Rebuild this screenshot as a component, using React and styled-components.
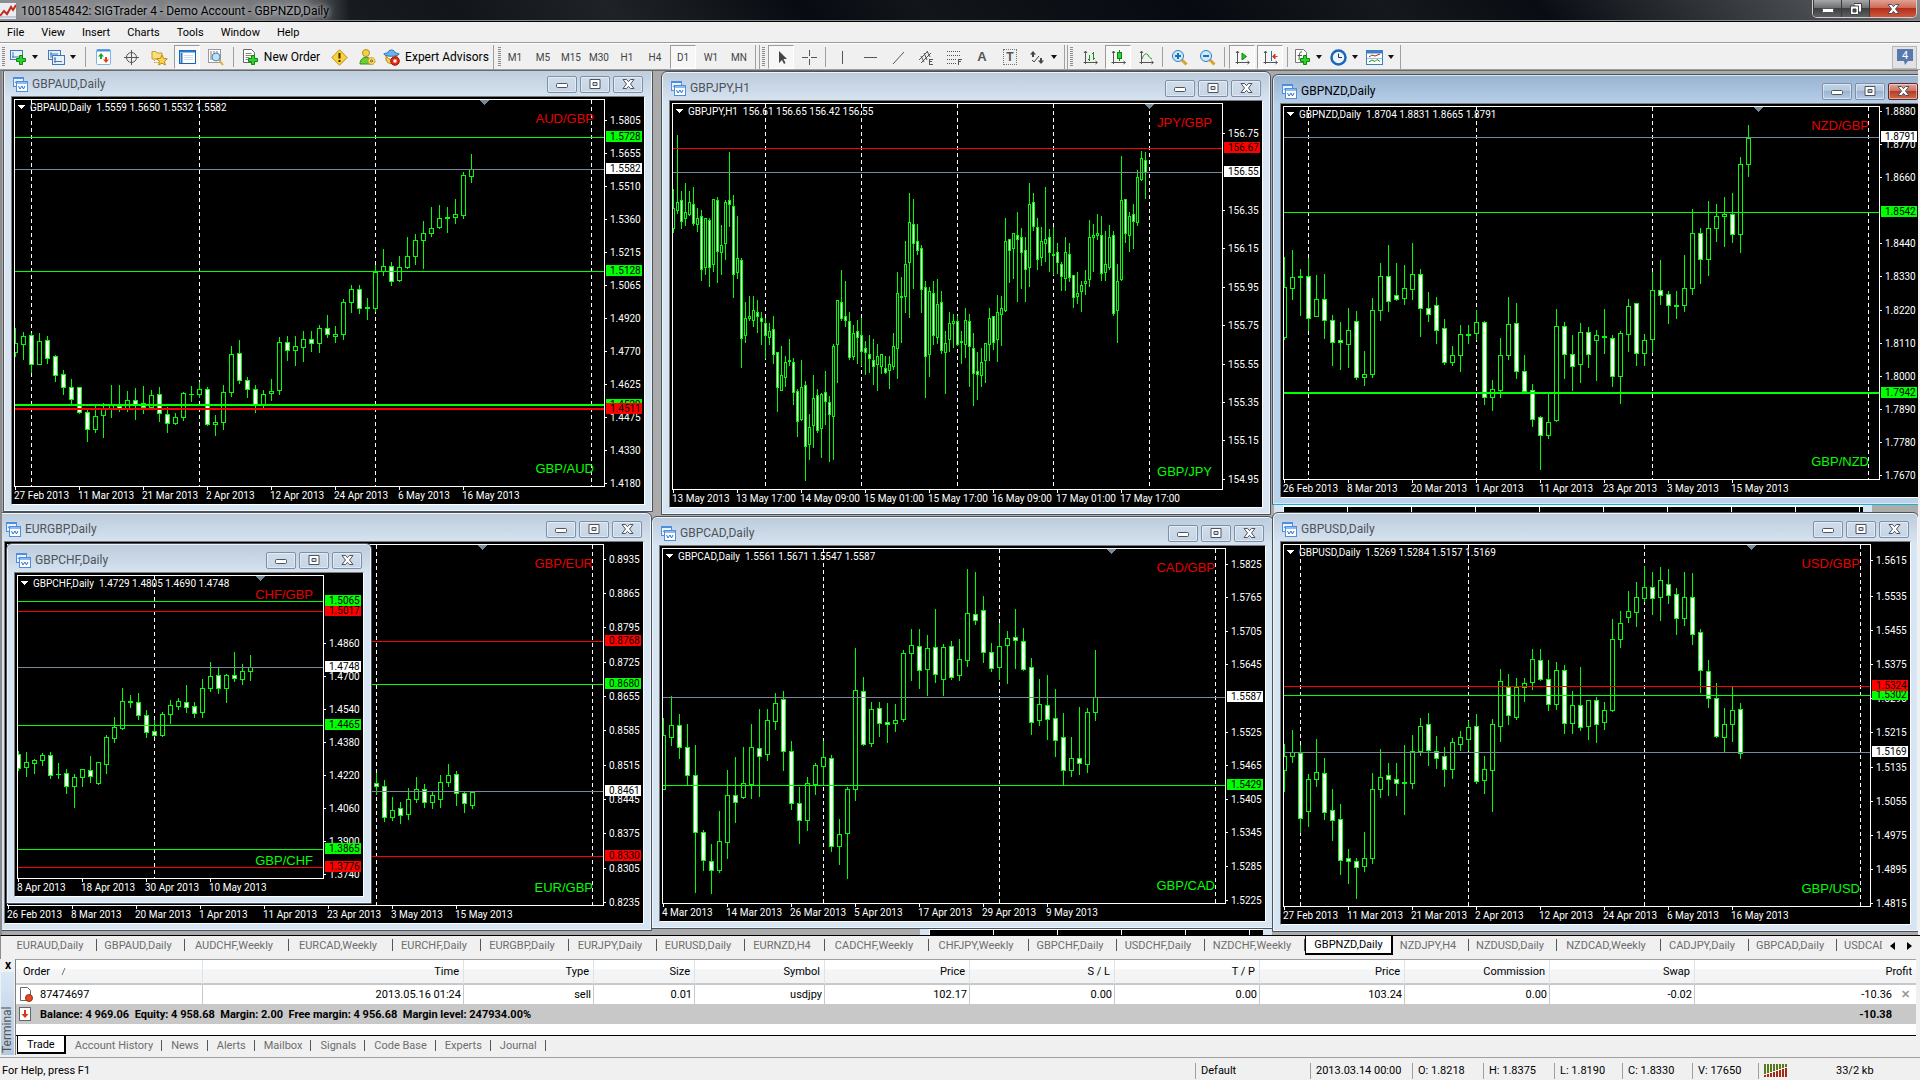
import React from 'react'
import styled, { createGlobalStyle, css } from 'styled-components'

const fonts = {
    ui: 'Roboto, "Open Sans", "Liberation Sans", sans-serif',
    label: '"Liberation Sans", Arial, sans-serif',
}

const colors = {
    face: '#f0f0f0',
    lime: '#00ff00',
    red: '#ff0000',
    slate: '#778899',
    muted: '#6d6d6d',
}

const GlobalStyle = createGlobalStyle`
    * {
        box-sizing: border-box;
    }

    body {
        margin: 0;
        overflow: hidden;
        background: ${colors.face};
        font-family: ${fonts.ui};
        font-size: 12px;
        color: #000;
    }

    button {
        margin: 0;
        padding: 0;
        border: 0;
        background: none;
        font: inherit;
        color: inherit;
    }
`

/* ---------- chart data ---------- */

// candle: [high, body top, body bottom, low, 1 when falling], in thirds of a pixel
const charts = {
    aud: {
        title: 'GBPAUD,Daily',
        quote: '1.5559 1.5650 1.5532 1.5582',
        top: 'AUD/GBP',
        bottom: 'GBP/AUD',
        left: 1, y: -3, width: 632, height: 407, base: 21, marker: 472,
        periods: [2, 23, 45, 72],
        lines: [
            [142, 'lime', '1.5728'],
            [238, 'slate', '1.5582'],
            [544, 'lime', '1.5128'],
            [944, 'lime', '1.4529', 2],
            [957, 'red', '1.4511', 2],
        ],
        prices: [[90, '1.5805'], [188, '1.5655'], [287, '1.5510'], [386, '1.5360'], [486, '1.5215'], [585, '1.5065'], [684, '1.4920'], [783, '1.4770'], [882, '1.4625'], [981, '1.4475'], [1080, '1.4330'], [1178, '1.4180']],
        dates: ['27 Feb 2013', '11 Mar 2013', '21 Mar 2013', '2 Apr 2013', '12 Apr 2013', '24 Apr 2013', '6 May 2013', '16 May 2013'],
        candles: [
            [715, 760, 785, 797], [727, 737, 761, 806], [730, 736, 823, 845, 1], [729, 752, 821, 822], [738, 751, 803, 818, 1], [796, 799, 854, 872, 1],
            [840, 853, 892, 911, 1], [866, 892, 926, 942, 1], [892, 892, 967, 968, 1], [961, 967, 1016, 1052, 1], [948, 979, 1016, 1026], [940, 955, 976, 1040],
            [885, 945, 955, 980], [885, 948, 956, 962, 1], [903, 931, 955, 963], [895, 931, 941, 986, 1], [888, 940, 952, 970, 1], [901, 915, 951, 958],
            [891, 913, 970, 992, 1], [952, 973, 1000, 1026, 1], [970, 982, 1000, 1001], [907, 910, 980, 990], [888, 912, 913, 932], [877, 898, 913, 920],
            [891, 898, 1003, 1006, 1], [976, 997, 1003, 1034], [885, 907, 997, 1017], [768, 793, 905, 917], [751, 790, 871, 879, 1], [861, 871, 898, 920, 1],
            [886, 898, 944, 965, 1], [900, 913, 944, 955], [867, 904, 910, 930], [741, 757, 901, 911], [738, 757, 781, 809, 1], [738, 769, 781, 825],
            [723, 748, 772, 812], [724, 748, 758, 784, 1], [706, 715, 758, 785], [675, 715, 733, 742, 1], [709, 733, 737, 755], [627, 637, 733, 746],
            [586, 598, 637, 665], [586, 596, 653, 668, 1], [625, 652, 653, 686], [526, 547, 653, 663], [477, 529, 544, 554], [517, 529, 574, 584, 1],
            [499, 532, 571, 573], [442, 499, 532, 533], [433, 451, 499, 521], [393, 430, 451, 533], [351, 415, 430, 438], [346, 385, 412, 413],
            [351, 382, 385, 426, 1], [327, 373, 382, 398], [247, 256, 374, 383], [192, 238, 257, 275],
        ],
    },
    eur: {
        title: 'EURGBP,Daily',
        quote: '',
        top: 'GBP/EUR',
        bottom: 'EUR/GBP',
        left: -6, y: 442, width: 638, height: 381, base: 96, marker: 477,
        periods: [46, 73],
        first: 46,
        lines: [
            [394, 'red', '0.8768'],
            [523, 'lime', '0.8680'],
            [844, 'slate', '0.8461'],
            [1038, 'red', '0.8330'],
        ],
        prices: [[146, '0.8935'], [248, '0.8865'], [350, '0.8795'], [455, '0.8725'], [557, '0.8655'], [659, '0.8585'], [764, '0.8515'], [867, '0.8445'], [968, '0.8375'], [1073, '0.8305'], [1175, '0.8235']],
        dates: ['26 Feb 2013', '8 Mar 2013', '20 Mar 2013', '1 Apr 2013', '11 Apr 2013', '23 Apr 2013', '3 May 2013', '15 May 2013'],
        candles: [
            [790, 820, 829, 851, 1], [811, 829, 922, 932, 1], [862, 901, 922, 929], [876, 895, 916, 938, 1], [835, 868, 913, 926], [802, 838, 868, 875],
            [823, 838, 877, 890, 1], [844, 856, 875, 893], [796, 817, 868, 890], [763, 796, 815, 827], [783, 793, 850, 884, 1], [843, 850, 880, 906, 1], [844, 845, 884, 893],
        ],
    },
    jpy: {
        title: 'GBPJPY,H1',
        quote: '156.61 156.65 156.42 156.55',
        top: 'JPY/GBP',
        bottom: 'GBP/JPY',
        left: 659, y: 1, width: 592, height: 406, base: 93, marker: 479, step: 4,
        periods: [23, 47, 71, 95, 119],
        lines: [
            [235, 'red', '156.67'],
            [307, 'slate', '156.55'],
        ],
        prices: [[188, '156.75'], [419, '156.35'], [533, '156.15'], [650, '155.95'], [764, '155.75'], [881, '155.55'], [995, '155.35'], [1109, '155.15'], [1226, '154.95']],
        dates: ['13 May 2013', '13 May 17:00', '14 May 09:00', '15 May 01:00', '15 May 17:00', '16 May 09:00', '17 May 01:00', '17 May 17:00'],
        candles: [
            [357, 415, 473, 485], [196, 397, 420, 430], [364, 391, 452, 473, 1], [340, 427, 445, 464], [363, 397, 433, 434], [352, 403, 458, 466, 1], [415, 445, 463, 484],
            [421, 439, 596, 629, 1], [444, 445, 590, 611], [445, 451, 590, 647, 1], [388, 388, 583, 602], [381, 391, 542, 635, 1], [466, 526, 547, 611], [391, 397, 520, 566],
            [246, 391, 403, 467, 1], [376, 409, 611, 680, 1], [438, 565, 607, 623], [565, 571, 803, 890, 1], [697, 745, 796, 815], [678, 739, 745, 751], [679, 721, 751, 767],
            [690, 727, 739, 785, 1], [726, 745, 754, 821, 1], [745, 760, 796, 865, 1], [760, 784, 802, 823], [738, 778, 853, 878, 1], [847, 847, 952, 1022, 1], [829, 916, 959, 960],
            [859, 877, 922, 947], [808, 869, 872, 884], [865, 877, 967, 1003, 1], [958, 964, 1054, 1097, 1], [870, 952, 1048, 1049], [933, 946, 1129, 1229, 1], [1032, 1072, 1123, 1166],
            [915, 985, 1066, 1130], [957, 976, 1079, 1085, 1], [969, 973, 1073, 1160], [903, 967, 992, 1061, 1], [979, 997, 1033, 1172, 1], [822, 829, 1039, 1166], [690, 691, 823, 935],
            [601, 697, 745, 751, 1], [633, 739, 751, 767, 1], [727, 754, 860, 866, 1], [765, 790, 859, 866], [751, 784, 802, 878, 1], [745, 796, 842, 884, 1], [814, 835, 847, 911, 1],
            [796, 853, 865, 905, 1], [808, 871, 889, 941, 1], [822, 859, 883, 959], [852, 853, 889, 908], [858, 893, 905, 910, 1], [858, 883, 899, 953], [789, 829, 889, 896],
            [606, 670, 835, 923], [622, 677, 682, 815, 1], [514, 583, 677, 727], [370, 457, 577, 740], [387, 463, 520, 653, 1], [463, 514, 541, 551, 1], [526, 535, 658, 727, 1],
            [634, 652, 859, 980, 1], [652, 664, 853, 917], [633, 670, 796, 821, 1], [628, 703, 802, 820], [664, 697, 841, 848, 1], [784, 820, 847, 968], [727, 760, 808, 842],
            [733, 754, 760, 830], [739, 754, 821, 824, 1], [784, 814, 817, 878], [715, 751, 821, 862], [733, 754, 829, 947, 1], [790, 835, 910, 1004, 1], [847, 904, 911, 986, 1],
            [835, 877, 916, 947], [820, 820, 871, 935], [715, 745, 823, 871], [739, 739, 815, 836, 1], [676, 727, 808, 872], [679, 715, 733, 824], [445, 514, 721, 722],
            [508, 508, 541, 635, 1], [490, 490, 535, 623], [426, 496, 508, 692, 1], [474, 502, 547, 653, 1], [502, 541, 596, 692, 1], [340, 403, 590, 647], [370, 397, 467, 481, 1],
            [445, 472, 566, 596, 1], [472, 514, 560, 584], [352, 508, 520, 572], [478, 502, 547, 602, 1], [472, 551, 554, 611], [519, 547, 577, 608, 1], [577, 583, 617, 659, 1],
            [502, 547, 623, 659], [520, 553, 622, 634, 1], [616, 616, 680, 710, 1], [607, 670, 677, 698], [634, 646, 664, 722], [601, 634, 640, 671], [451, 502, 628, 647],
            [463, 496, 500, 602], [433, 490, 496, 508], [439, 496, 610, 629, 1], [484, 583, 607, 629], [466, 502, 590, 596], [484, 496, 728, 734, 1], [583, 634, 721, 815],
            [259, 391, 628, 629], [388, 388, 490, 515, 1], [427, 439, 496, 542], [403, 433, 452, 533, 1], [301, 322, 457, 464], [244, 265, 328, 330], [247, 271, 306, 383, 1],
        ],
    },
    cad: {
        title: 'GBPCAD,Daily',
        quote: '1.5561 1.5671 1.5547 1.5587',
        top: 'CAD/GBP',
        bottom: 'GBP/CAD',
        left: 649, y: 446, width: 605, height: 375, base: 108, marker: 451,
        periods: [20, 42, 69],
        lines: [
            [562, 'slate', '1.5587'],
            [826, 'lime', '1.5429'],
        ],
        prices: [[161, '1.5825'], [260, '1.5765'], [362, '1.5705'], [461, '1.5645'], [665, '1.5525'], [764, '1.5465'], [866, '1.5405'], [965, '1.5345'], [1067, '1.5285'], [1169, '1.5225']],
        dates: ['4 Mar 2013', '14 Mar 2013', '26 Mar 2013', '5 Apr 2013', '17 Apr 2013', '29 Apr 2013', '9 May 2013'],
        candles: [
            [625, 676, 836, 837], [559, 646, 680, 704], [613, 646, 710, 743, 1], [643, 710, 794, 821, 1], [705, 796, 965, 1145, 1], [960, 967, 1051, 1079, 1],
            [1003, 1053, 1079, 1148, 1], [904, 994, 1081, 1085], [781, 856, 995, 1043], [742, 856, 875, 935, 1], [711, 820, 862, 863], [642, 712, 821, 863],
            [598, 715, 737, 857, 1], [598, 631, 733, 751], [549, 580, 632, 656], [544, 568, 722, 779, 1], [693, 724, 880, 896, 1], [832, 880, 929, 998, 1],
            [802, 820, 931, 960], [759, 766, 823, 851], [694, 742, 769, 826], [736, 745, 1009, 1022, 1], [928, 973, 1009, 1061], [832, 838, 970, 1103],
            [414, 541, 838, 869], [502, 544, 703, 705, 1], [577, 598, 700, 707], [577, 595, 638, 677, 1], [580, 637, 643, 695, 1], [583, 631, 640, 662],
            [421, 430, 628, 632], [358, 406, 428, 510], [357, 409, 479, 533, 1], [376, 415, 478, 554], [297, 412, 493, 515, 1], [402, 412, 508, 554],
            [393, 409, 500, 507, 1], [388, 448, 496, 510], [178, 310, 449, 467], [187, 313, 331, 341, 1], [258, 301, 425, 455, 1], [400, 427, 473, 483, 1],
            [339, 409, 472, 506], [364, 385, 406, 518], [297, 382, 391, 473, 1], [354, 394, 476, 480, 1], [445, 472, 635, 671, 1], [508, 583, 631, 644],
            [495, 586, 628, 686, 1], [538, 625, 689, 738, 1], [610, 682, 781, 826, 1], [682, 745, 781, 798], [592, 745, 760, 791, 1], [595, 607, 763, 785], [421, 562, 605, 629],
        ],
    },
    chf: {
        title: 'GBPCHF,Daily',
        quote: '1.4729 1.4805 1.4690 1.4748',
        top: 'CHF/GBP',
        bottom: 'GBP/CHF',
        left: 4, y: 473, width: 348, height: 323, base: 189, marker: 245,
        periods: [17],
        lines: [
            [304, 'red', '1.5017'],
            [274, 'lime', '1.5065'],
            [472, 'slate', '1.4748'],
            [646, 'lime', '1.4465'],
            [1018, 'lime', '1.3865'],
            [1072, 'red', '1.3776'],
        ],
        prices: [[398, '1.4860'], [497, '1.4700'], [597, '1.4540'], [695, '1.4380'], [795, '1.4220'], [893, '1.4060'], [992, '1.3900'], [1092, '1.3740']],
        dates: ['8 Apr 2013', '18 Apr 2013', '30 Apr 2013', '10 May 2013'],
        candles: [
            [724, 733, 773, 780, 1], [726, 757, 772, 797], [747, 751, 758, 788], [729, 736, 751, 765], [726, 736, 794, 803, 1], [760, 791, 793, 804],
            [778, 790, 829, 848, 1], [793, 802, 829, 890], [778, 778, 802, 827], [738, 781, 797, 815, 1], [757, 757, 818, 822], [675, 682, 761, 788],
            [621, 652, 683, 695], [534, 574, 653, 656], [556, 572, 575, 590], [550, 577, 616, 626, 1], [601, 616, 667, 680, 1], [631, 664, 674, 677, 1],
            [606, 613, 674, 677], [571, 586, 611, 638], [564, 574, 587, 596], [525, 577, 590, 605, 1], [577, 589, 608, 620, 1], [507, 535, 605, 620],
            [457, 499, 535, 542], [474, 496, 533, 548, 1], [493, 496, 533, 575], [426, 496, 503, 512, 1], [462, 484, 506, 521], [436, 472, 482, 509],
        ],
    },
    usd: {
        title: 'GBPUSD,Daily',
        quote: '1.5269 1.5284 1.5157 1.5169',
        top: 'USD/GBP',
        bottom: 'GBP/USD',
        left: 1270, y: 442, width: 629, height: 382, base: 126, marker: 470,
        periods: [2, 23, 45, 72],
        lines: [
            [586, 'lime', '1.5302'],
            [559, 'red', '1.5324'],
            [757, 'slate', '1.5169'],
        ],
        prices: [[181, '1.5615'], [287, '1.5535'], [389, '1.5455'], [491, '1.5375'], [593, '1.5295'], [695, '1.5215'], [800, '1.5135'], [903, '1.5055'], [1004, '1.4975'], [1106, '1.4895'], [1208, '1.4815']],
        dates: ['27 Feb 2013', '11 Mar 2013', '21 Mar 2013', '2 Apr 2013', '12 Apr 2013', '24 Apr 2013', '6 May 2013', '16 May 2013'],
        candles: [
            [733, 769, 811, 872], [690, 757, 769, 785], [736, 760, 953, 995, 1], [823, 838, 934, 977], [718, 817, 838, 857], [774, 820, 935, 956, 1],
            [868, 931, 959, 1019, 1], [912, 958, 1079, 1121, 1], [1047, 1075, 1084, 1148, 1], [1075, 1084, 1100, 1194, 1], [996, 1075, 1097, 1112], [820, 868, 1075, 1088],
            [748, 832, 868, 890], [790, 826, 838, 884, 1], [790, 838, 848, 884, 1], [736, 846, 849, 941], [706, 754, 848, 863], [655, 679, 754, 765],
            [640, 673, 751, 795, 1], [708, 754, 773, 803, 1], [741, 769, 808, 857, 1], [714, 727, 808, 833], [693, 712, 731, 749], [663, 682, 718, 750],
            [642, 679, 842, 848, 1], [768, 808, 841, 878], [658, 673, 811, 933], [508, 544, 677, 722], [522, 560, 646, 671, 1], [534, 562, 650, 656],
            [534, 550, 562, 602], [448, 478, 547, 567], [448, 481, 536, 540, 1], [481, 538, 611, 629, 1], [487, 511, 611, 627], [495, 511, 668, 698, 1],
            [574, 616, 670, 698], [502, 616, 680, 689, 1], [600, 601, 677, 716], [592, 601, 671, 725, 1], [607, 631, 667, 686], [358, 418, 631, 634],
            [334, 370, 418, 440], [273, 334, 350, 366], [247, 292, 335, 378], [198, 262, 293, 303], [217, 262, 293, 342, 1], [202, 241, 290, 360],
            [207, 253, 284, 309, 1], [264, 283, 355, 402, 1], [217, 292, 353, 375], [220, 290, 401, 432, 1], [388, 397, 509, 575, 1], [481, 514, 593, 621, 1],
            [549, 595, 707, 710, 1], [625, 673, 710, 753], [562, 631, 673, 722], [610, 628, 758, 773, 1],
        ],
    },
    nzd: {
        title: 'GBPNZD,Daily',
        quote: '1.8704 1.8831 1.8665 1.8791',
        top: 'NZD/GBP',
        bottom: 'GBP/NZD',
        left: 1270, y: 4, width: 638, height: 393, base: 102, marker: 477, active: true,
        periods: [3, 24, 46, 73],
        lines: [
            [202, 'slate', '1.8791'],
            [427, 'lime', '1.8542'],
            [968, 'lime', '1.7942', 2],
        ],
        prices: [[122, '1.8880'], [222, '1.8770'], [320, '1.8660'], [518, '1.8440'], [618, '1.8330'], [719, '1.8220'], [818, '1.8110'], [917, '1.8000'], [1016, '1.7890'], [1115, '1.7780'], [1214, '1.7670']],
        dates: ['26 Feb 2013', '8 Mar 2013', '20 Mar 2013', '1 Apr 2013', '11 Apr 2013', '23 Apr 2013', '3 May 2013', '15 May 2013'],
        candles: [
            [562, 652, 800, 806], [541, 622, 653, 686], [597, 619, 622, 735], [564, 619, 745, 779, 1], [616, 688, 737, 738], [613, 688, 751, 803, 1],
            [736, 751, 815, 884, 1], [757, 811, 817, 896, 1], [714, 781, 821, 890], [724, 754, 922, 926, 1], [844, 913, 922, 945], [685, 721, 913, 920],
            [579, 619, 721, 749], [525, 619, 694, 722, 1], [580, 676, 688, 689, 1], [586, 655, 685, 701], [519, 613, 656, 686], [598, 613, 715, 797, 1],
            [666, 715, 731, 752, 1], [682, 706, 779, 818, 1], [748, 775, 877, 881, 1], [828, 856, 877, 884], [766, 793, 856, 902], [766, 791, 794, 820],
            [721, 757, 788, 808], [754, 757, 982, 1001, 1], [931, 958, 980, 1019], [805, 856, 959, 980], [681, 763, 856, 866], [699, 760, 904, 923, 1],
            [855, 904, 962, 963, 1], [942, 961, 1046, 1067, 1], [1038, 1042, 1094, 1196, 1], [972, 1057, 1096, 1103], [718, 769, 1051, 1052], [757, 769, 853, 923, 1],
            [795, 853, 887, 960, 1], [759, 787, 883, 936], [772, 787, 853, 890, 1], [780, 796, 811, 930], [718, 799, 802, 848], [796, 805, 919, 948, 1],
            [783, 790, 919, 998], [687, 709, 793, 843], [700, 700, 850, 884, 1], [792, 811, 850, 884], [606, 661, 808, 845], [571, 661, 674, 701, 1],
            [663, 673, 706, 759, 1], [663, 705, 707, 744], [556, 655, 706, 723], [418, 490, 655, 671], [474, 490, 566, 639, 1], [393, 475, 566, 615],
            [402, 439, 473, 514], [381, 433, 439, 528], [369, 433, 493, 516, 1], [262, 283, 493, 546], [165, 203, 283, 318],
        ],
    },
}

// back to front
const stacking = ['aud', 'eur', 'jpy', 'cad', 'chf', 'usd', 'nzd']

/* ---------- shell ---------- */

const Page = styled.div`
    display: flex;
    flex-direction: column;
    height: 100vh;
    background: ${colors.face};
`

const AppBar = styled.header`
    display: flex;
    align-items: center;
    justify-content: space-between;
    flex: 0 0 22px;
    border-bottom: 1px solid #000;
    box-shadow: inset 0 -1px 0 #8a8c90;
    background:
        linear-gradient(90deg, rgba(150, 152, 156, 0.9) 0, rgba(128, 130, 134, 0.85) 300px, transparent 350px),
        linear-gradient(50deg, #2a2d31 0, #12161b 24%, #1f2327 32%, #080c12 42%, #12161b 48%, #070b11 62%, #15191d 72%, #090d13 80%, #565a5e 97%, #8b8d90 100%);
`

const AppTitle = styled.h1`
    display: flex;
    align-items: center;
    gap: 5px;
    margin: 0;
    font-size: 12px;
    font-weight: 400;
    text-shadow: 0 0 6px #c4c6c8, 0 0 6px #c4c6c8;
`

const AppControls = styled.div`
    display: flex;
    align-self: flex-start;
    height: 18px;
    margin-right: 3px;
    border: 1px solid #d0d0d0;
    border-top: 0;
    border-radius: 0 0 5px 5px;
    overflow: hidden;
`

const AppControl = styled.button`
    display: grid;
    place-items: center;
    width: ${(p) => (p.$close ? 47 : 28)}px;
    border-left: 1px solid #3a3a3a;
    background: ${(p) =>
        p.$close
            ? 'linear-gradient(#e0a294 0, #cf6a55 45%, #b2301a 50%, #d0563c 100%)'
            : 'linear-gradient(#a6a8aa 0, #6f7173 45%, #3d3f41 50%, #5e6062 100%)'};
`

const MenuBar = styled.nav`
    display: flex;
    align-items: center;
    gap: 17px;
    flex: 0 0 21px;
    padding-left: 7px;
    border-bottom: 1px solid #9a9a9a;
    font-size: 11px;
`

const ToolBar = styled.div`
    display: flex;
    align-items: center;
    flex: 0 0 27px;
    padding-top: 1px;
    border-top: 1px solid #fff;
    border-bottom: 1px solid #a0a0a0;
`

const Grip = styled.i`
    width: 3px;
    height: 20px;
    margin: 0 ${(p) => p.$after || 0}px 0 2px;
    background: repeating-linear-gradient(#8c8c8c 0 1px, transparent 1px 2px);
`

const Divider = styled.i`
    display: grid;
    justify-content: center;
    width: ${(p) => p.$w || 8}px;
    height: 20px;

    &::before {
        content: '';
        width: 1px;
        background: #a0a0a0;
    }
`

const BarEnd = styled.i`
    width: ${(p) => p.$w || 3}px;
    height: 24px;
    margin-left: 2px;
    border-left: 1px solid #a0a0a0;
    border-right: ${(p) => (p.$single ? 0 : 1)}px solid #a0a0a0;
`

const Tool = styled.button`
    display: flex;
    align-items: center;
    justify-content: center;
    gap: 5px;
    width: ${(p) => p.$w || 28}px;
    height: 24px;
    white-space: nowrap;
    border: 1px solid transparent;
    ${(p) =>
        p.$pressed &&
        css`
            border-color: #9c9c9c #fff #fff #9c9c9c;
            background: #f7f7f7;
            margin: 0 1px;
            width: 26px;
        `}
`

const Period = styled(Tool)`
    font-size: 10px;
    color: #444;
`

const Notice = styled.button`
    display: grid;
    place-items: center;
    width: 25px;
    height: 23px;
    margin: 0 3px 0 auto;
    border: 1px solid #b8b8b8;
    background: #e2e2e2;
`

const Caret = () => (
    <svg width="6" height="4" viewBox="0 0 6 4">
        <path d="M0 0h6L3 4z" fill="#111" />
    </svg>
)

/* ---------- chart windows ---------- */

const Workspace = styled.main`
    position: relative;
    flex: 1;
    min-height: 0;
    overflow: hidden;
    margin-right: 2px;
    border-left: 2px solid #8c8c8c;
    border-top: 1px solid #6a6a6a;
    background: #ababab;
`

const Frame = styled.section`
    position: absolute;
    left: ${(p) => p.$left}px;
    top: ${(p) => p.$top}px;
    padding: 0 7px 6px;
    border: 1px solid #4d5258;
    border-radius: 6px 6px 0 0;
    background: ${(p) =>
        p.$active
            ? 'linear-gradient(#97b2d0 0, #b9d1ea 30px, #b9d1ea 100%)'
            : 'linear-gradient(#bccbda 0, #d7e4f2 30px, #d7e4f2 100%)'};
    box-shadow: inset 0 0 0 1px ${(p) => (p.$active ? '#d9e9f8' : '#edf4fb')};
    ${(p) => p.$active && 'border-bottom-color: #16b5cf;'}
`

const Caption = styled.header`
    display: flex;
    align-items: center;
    gap: 4px;
    height: 28px;
    padding: 4px 2px 0 2px;
    color: ${(p) => (p.$active ? '#000' : '#4c535b')};

    & > h2 {
        flex: 1;
        margin: 0;
        font-size: 12px;
        font-weight: 400;
    }
`

const CaptionButtons = styled.div`
    display: flex;
    gap: 3px;
`

const CaptionButton = styled.button`
    display: grid;
    place-items: center;
    width: 30px;
    height: 17px;
    border: 1px solid ${(p) => (p.$danger ? '#5b2a2a' : '#7f8fa6')};
    border-radius: 2px;
    background: ${(p) =>
        p.$danger
            ? 'linear-gradient(#e3a598 0, #cf7363 45%, #b83c25 50%, #cf6a50 100%)'
            : p.$active
              ? 'linear-gradient(#c2d4e8 0, #b3c8df 45%, #9cb4d0 50%, #b5cce4 100%)'
              : 'linear-gradient(#cfdcea 0, #c6d5e6 100%)'};
    box-shadow: inset 0 0 0 1px rgba(255, 255, 255, 0.45);
`

const Client = styled.div`
    border: 1px solid;
    border-color: #7b7b7b #fff #fff #7b7b7b;
    background: #000;

    & > svg {
        display: block;
        font-size: 10px;
    }
`

// windows fully covered by others, only a strip stays in view
const Sliver = styled.div`
    position: absolute;
    left: ${(p) => p.$left}px;
    top: ${(p) => p.$top}px;
    width: ${(p) => p.$w}px;
    height: 9px;
    border: solid #d7e4f2;
    border-width: 0 9px;
    background: repeating-linear-gradient(90deg, #fff 0 1px, transparent 1px 64px), #000;
    box-shadow: inset 0 2px 0 #fff;
`

function Chart({ data }) {
    const { width: w, height: h, base, step = 8, first = 0 } = data
    const right = w - 40
    const bottom = h - 18
    const body = step === 8 ? 5 : 3
    const row = (v) => Math.round((v - base) / 3)
    const col = (i) => 3 + i * step
    const clip = `plot-${data.top.replace('/', '')}`

    return (
        <svg width={w} height={h} viewBox={`0 0 ${w} ${h}`} shapeRendering="crispEdges">
            <clipPath id={clip}>
                <rect x="3" y="3" width={right - 3} height={bottom - 3} />
            </clipPath>
            <g clipPath={`url(#${clip})`}>
                {data.periods.map((i) => (
                    <line key={i} x1={col(i) + 0.5} x2={col(i) + 0.5} y1="3" y2={bottom} stroke="#fff" strokeDasharray="4 3" />
                ))}
                {data.candles.map(([high, top, low, end, down], i) => {
                    const x = col(i + first)
                    const y = row(top)
                    const tall = Math.max(1, row(low) - y + 1)
                    return (
                        <g key={i}>
                            <rect x={x} y={row(high)} width="1" height={row(end) - row(high) + 1} fill={colors.lime} />
                            <rect x={x - (body - 1) / 2} y={y} width={body} height={tall} fill={colors.lime} />
                            {tall > 2 && (
                                <rect x={x - (body - 3) / 2} y={y + 1} width={body - 2} height={tall - 2} fill={down ? '#fff' : '#000'} />
                            )}
                        </g>
                    )
                })}
                {data.lines.map(([y, color, label, size = 1]) => (
                    <rect key={label} x="3" y={row(y) - size + 1} width={right} height={size} fill={colors[color]} />
                ))}
                <path d={`M${data.marker - 5} 3h10l-5 5z`} fill={colors.slate} />
            </g>
            <rect x="2.5" y="2.5" width={right - 2} height={bottom - 2} fill="none" stroke="#fff" />

            <g fontFamily={fonts.label} fontSize="13" textAnchor="end">
                <text x={w - 50} y="26" fill="#e60000">{data.top}</text>
                <text x={w - 50} y={h - 31} fill={colors.lime}>{data.bottom}</text>
            </g>

            {data.quote && (
                <>
                    <path d="M6 8h7l-3.5 4z" fill="#fff" />
                    <text x="18" y="14" fill="#fff" xmlSpace="preserve">
                        {`${data.title}  ${data.quote}`}
                    </text>
                </>
            )}

            {data.prices.map(([y, text]) => (
                <g key={text} fill="#fff">
                    <rect x={right} y={row(y)} width="3" height="1" />
                    <text x={w - 34} y={row(y) + 4}>{text}</text>
                </g>
            ))}
            {data.lines.map(([y, color, text]) => (
                <g key={text}>
                    <rect x={w - 38} y={row(y) - 6} width="36" height="11" fill={color === 'slate' ? '#fff' : colors[color]} />
                    <text x={w - 34} y={row(y) + 3}>{text}</text>
                </g>
            ))}
            {data.dates.map((text, i) => (
                <g key={text} fill="#fff">
                    <rect x={3 + i * 64} y={bottom} width="1" height="4" />
                    <text x={2 + i * 64} y={h - 5}>{text}</text>
                </g>
            ))}
        </svg>
    )
}

const MinGlyph = () => (
    <svg width="12" height="10" viewBox="0 0 12 10">
        <rect x="0.5" y="4.5" width="11" height="4" rx="1" fill="#fff" stroke="#4e545e" />
    </svg>
)

const MaxGlyph = () => (
    <svg width="12" height="10" viewBox="0 0 12 10">
        <path fillRule="evenodd" d="M1 .5h10v9H1zM4 3.500h4v3H4z" fill="#fff" stroke="#4e545e" />
    </svg>
)

const CloseGlyph = () => (
    <svg width="13" height="10" viewBox="0 0 13 10">
        <path d="M1 .5h3.500l2 2.200 2-2.200H12L8.500 5 12 9.500H8.500l-2-2.200-2 2.200H1L4.500 5z" fill="#fff" stroke="#4e545e" />
    </svg>
)

const ChartGlyph = () => (
    <svg width="15" height="15" viewBox="0 0 15 15">
        <rect x="0.5" y="0.5" width="10" height="9" fill="#eaf3ff" stroke="#4d8ee0" />
        <path d="M1 1.500h9" stroke="#4d8ee0" />
        <path d="M2 6l1.500-2L5 6l1.500-2L8 6" fill="none" stroke="#4d8ee0" />
        <rect x="3.5" y="4.5" width="11" height="10" fill="#fff" stroke="#4d8ee0" />
        <path d="M4 6h10" stroke="#8db9f0" strokeWidth="2" />
        <path d="M5.500 9l1.500 3 2-3 1.500 3L12 9" fill="none" stroke="#2f73c8" />
    </svg>
)

function ChartWindow({ data }) {
    return (
        <Frame $left={data.left} $top={data.y - 1} $active={data.active} aria-label={data.title}>
            <Caption $active={data.active}>
                <ChartGlyph />
                <h2>{data.title}</h2>
                <CaptionButtons>
                    <CaptionButton $active={data.active} aria-label="Minimize"><MinGlyph /></CaptionButton>
                    <CaptionButton $active={data.active} aria-label="Maximize"><MaxGlyph /></CaptionButton>
                    <CaptionButton $danger={data.active} aria-label="Close"><CloseGlyph /></CaptionButton>
                </CaptionButtons>
            </Caption>
            <Client>
                <Chart data={data} />
            </Client>
        </Frame>
    )
}

/* ---------- toolbar icons ---------- */

const Icon = ({ size = 17, children }) => (
    <svg width={size} height={size} viewBox="0 0 17 17" fill="none" stroke="#555" aria-hidden="true">
        {children}
    </svg>
)

const Plus = ({ x = 6, y = 6 }) => (
    <path d={`M${x + 3.5} ${y + 0.5}h3v3h3v3h-3v3h-3v-3h-3v-3h3z`} fill="#2fd32f" stroke="#0a8a0a" />
)

const Axes = () => <path d="M3.500 2v13M1.500 13.500H15M2 4l1.500-2L5 4M13.500 12l2 1.500-2 1.500" stroke="#555" />

const icons = {
    newChart: <><rect x="0.5" y="1.5" width="12" height="9" fill="#e8f1fb" stroke="#4179b8" /><path d="M3 3v6M2 8h8" stroke="#4179b8" /><Plus /></>,
    profiles: <><rect x="0.5" y="1.5" width="12" height="9" fill="#e8f1fb" stroke="#4179b8" /><path d="M3 3v6M2 5h8" stroke="#4179b8" /><rect x="4.5" y="6.5" width="12" height="9" fill="#e8f1fb" stroke="#4179b8" /><path d="M7 8v6M6 12.500h8M6 10h2" stroke="#4179b8" /></>,
    market: <><rect x="1.5" y="0.5" width="14" height="15" rx="1" fill="#fff" stroke="#7fb2e6" /><path d="M2 1.500h13" stroke="#4a90d9" strokeWidth="2" /><path d="M3 7.500L6 4l3 3.500H7V10H5V7.500z" fill="#1fa81f" stroke="none" /><path d="M8 10.500h2V8h2v2.500h2L11 14z" fill="#e0401c" stroke="none" /></>,
    navigator: <><circle cx="8.5" cy="8.5" r="5" /><path d="M8.500 1v15M1 8.500h15" /></>,
    folder: <><path d="M1 2.500h4l1 1.500h5v6H1z" fill="#f8df80" stroke="#c79a2b" /><path d="M3.500 11v4M3.500 13.500H8" stroke="#c79a2b" strokeDasharray="1 1" /><path d="M11 6l1.600 3.400 3.700.4-2.800 2.500.8 3.700-3.300-1.900L7.700 16l.8-3.700-2.800-2.500 3.700-.4z" fill="#fbd34a" stroke="#c08a12" /></>,
    terminal: <><rect x="0.5" y="1.5" width="16" height="13" fill="#fff" stroke="#1b62ad" /><path d="M1 2.500h15" stroke="#2a78c8" strokeWidth="2" /><path d="M2.500 4v10" stroke="#2a78c8" strokeWidth="2" /><path d="M5 6.500h9M5 8.500h9M5 10.500h9" stroke="#cdddf0" /></>,
    tester: <><rect x="1.5" y="0.5" width="12" height="13" fill="#fff" stroke="#999" /><path d="M4 2v9M7 2v4M10 2v5" stroke="#777" /><circle cx="9" cy="8" r="4" fill="#bfe0f7" stroke="#4c86b5" /><path d="M12 11l4 5" stroke="#e0a83a" strokeWidth="2" /></>,
    order: <><path d="M1.500.5h8l3 3v10h-11z" fill="#fff" stroke="#666" /><path d="M3.500 4.500h6M3.500 6.500h6M3.500 8.500h4M3.500 10.500h3" stroke="#888" /><Plus /></>,
    alert: <><path d="M8.500.8l7.700 7.700-7.700 7.700L.8 8.500z" fill="#f8d23c" stroke="#c3920e" /><path d="M8.500 4v5.500M8.500 11v2" stroke="#3b2c00" strokeWidth="2" /></>,
    person: <><circle cx="7" cy="4" r="3.500" fill="#f5cf4a" stroke="#b98c14" /><path d="M1 15c0-9 12-9 12 0z" fill="#6ecb36" stroke="#3a8d18" /><circle cx="12.500" cy="12" r="3.500" fill="#ffd84a" stroke="#b98c14" strokeDasharray="2 1" /><circle cx="12.500" cy="12" r="1" fill="#fff" /></>,
    expert: <><path d="M3 6c2 6 9 6 11 0v5c-2 5-9 5-11 0z" fill="#f4cd58" stroke="#b98c14" /><path d="M.8 5c2 3 13 3 15.400 0-2-1-3-1-4-1-.5-4-7-4-7.500 0C3 4 2 4 .8 5z" fill="#69b4e8" stroke="#2a75b0" /><circle cx="12" cy="12" r="4.300" fill="#e02a12" stroke="#a51505" /><rect x="10.500" y="10.500" width="3" height="3" fill="#fff" stroke="none" /></>,
    cursor: <path d="M6 2v12l3-3 2 4 1.500-1-2-4H14z" fill="#444" stroke="none" />,
    cross: <path d="M8.500 1v6M8.500 10v6M1 8.500h6M10 8.500h6" />,
    vline: <path d="M8.500 2v13" />,
    hline: <path d="M2 8.500h13" />,
    trend: <path d="M3 15L14 3" />,
    channel: <><path d="M1 11L10 2M3 14L13 4M3 7l3 6M6 4l3 7M9 2l3 6" strokeWidth="1" /><path d="M11.500 10v5.500M11 10.500h4M11 12.500h3M11 15.500h4" /></>,
    fibo: <><path d="M1 2.500h14M1 6.500h14M1 10.500h9M1 14.500h9" strokeDasharray="1 1" /><path d="M12.500 10v6M12 10.500h4M12 12.500h3" /></>,
    arrows: <><path d="M1 5.500L4 2l3 3.500H5V8H3V5.500z" fill="#444" stroke="none" /><path d="M9 11.500h2V9h2v2.500h2L12 15z" fill="#444" stroke="none" /><path d="M3 11l2 2 5-6" stroke="#444" /></>,
    bars: <><Axes /><path d="M7.500 6v6M6 10.500h1.500M11.500 3v8M10 4.500h1.500M11.500 9.500H13" stroke="#1a8f1a" /></>,
    candles: <><Axes /><path d="M9.500 1v11" stroke="#0a8a0a" /><rect x="7.500" y="3.500" width="4" height="6" fill="#2fd32f" stroke="#0a8a0a" /></>,
    line: <><Axes /><path d="M4 10c2-6 5-6 6-4s2 3 4 4" stroke="#1a8f1a" /></>,
    zoomIn: <><path d="M10.500 10.500l5 5" stroke="#dba12e" strokeWidth="3" /><circle cx="7" cy="7" r="5.500" fill="#cfe9fb" stroke="#2d7fc1" /><path d="M7 4v6M4 7h6" stroke="#1c6fb5" strokeWidth="2" /></>,
    zoomOut: <><path d="M10.500 10.500l5 5" stroke="#dba12e" strokeWidth="3" /><circle cx="7" cy="7" r="5.500" fill="#cfe9fb" stroke="#2d7fc1" /><path d="M4 7h6" stroke="#1c6fb5" strokeWidth="2" /></>,
    scroll: <><Axes /><path d="M8 4v7l4.500-3.500z" fill="#2fbf2f" stroke="#0a8a0a" /></>,
    shift: <><Axes /><path d="M9.500 2v10" stroke="#1c6fb5" /><path d="M15.500 7.500H12M13 5l-2.500 2.500L13 10z" fill="#d5401c" stroke="#d5401c" /></>,
    indicators: <><path d="M1.500.5h8l3 3v10h-11z" fill="#fff" stroke="#777" /><path d="M8 3c-3-1-2.500 3-3 8M3.500 6.500H8" stroke="#555" /><Plus /></>,
    clock: <><circle cx="8.500" cy="8.500" r="7" fill="#eaf4fd" stroke="#1b66b8" strokeWidth="2.500" /><path d="M8.500 4.500v4H12" stroke="#333" /></>,
    template: <><rect x="0.5" y="1.5" width="16" height="14" fill="#fff" stroke="#3b7fc4" /><path d="M1 3h15" stroke="#3b7fc4" strokeWidth="3" /><path d="M3 8l3-2 3 1 5-2" stroke="#a03018" /><path d="M3 13l3-2 3 1.500 2-2 3 2" stroke="#1a8f1a" /><path d="M1 9.500h15" stroke="#9bbfe4" /></>,
}

const DropTool = ({ icon, label, w = 36 }) => (
    <Tool $w={w} aria-label={label}>
        <Icon>{icons[icon]}</Icon>
        <Caret />
    </Tool>
)

const IconTool = ({ icon, label, pressed }) => (
    <Tool $pressed={pressed} aria-label={label}>
        <Icon>{icons[icon]}</Icon>
    </Tool>
)

const Letter = styled.span`
    font-family: ${fonts.label};
    font-size: 13px;
    font-weight: 700;
    line-height: 14px;
    color: #555;
    ${(p) => p.$boxed && 'border: 1px dotted #777; padding: 0 2px; font-size: 12px;'}
`

/* ---------- tabs, terminal, status ---------- */

const ChartTabs = styled.nav`
    display: flex;
    flex: 0 0 24px;
    position: relative;
    padding: 0 36px 0 8px;
    overflow: hidden;
    border-top: 1px solid #000;
    border-left: 1px solid #8c8c8c;
    font-size: 11px;
    color: ${colors.muted};
`

const ChartTab = styled.button`
    flex: 0 0 ${(p) => p.$w}px;
    height: 19px;
    padding-right: 6px;
    background: linear-gradient(#555, #555) right 3px / 1px 12px no-repeat;
    ${(p) =>
        p.$active &&
        css`
            padding-right: 0;
            color: #000;
            background: #fff;
            border: solid #000;
            border-width: 0 2px 2px 1px;
        `}
`

const TabArrows = styled.div`
    position: absolute;
    right: 0;
    top: 0;
    display: flex;
    align-items: center;
    gap: 12px;
    height: 19px;
    padding: 0 8px;
    background: ${colors.face};
`

const Terminal = styled.section`
    display: flex;
    flex: 0 0 99px;
    padding: 0 4px 2px 0;
    border-bottom: 1px solid #a0a0a0;
`

const Side = styled.aside`
    display: flex;
    flex-direction: column;
    flex: 0 0 15px;
    padding-left: 1px;
`

const SideClose = styled.button`
    height: 13px;
    font-size: 12px;
    line-height: 11px;
    font-weight: 700;
`

const SideLabel = styled.div`
    flex: 1;
    display: flex;
    align-items: center;
    width: 13px;
    writing-mode: vertical-rl;
    transform: rotate(180deg);
    line-height: 13px;
    font-size: 12px;
    color: #555;
    background: linear-gradient(0deg, #dbe8f6, #b5c8dc);
    padding-top: 2px;
`

const Panel = styled.div`
    flex: 1;
    display: flex;
    flex-direction: column;
    border-left: 1px solid #808080;
    border-top: 1px solid #a0a0a0;
    background: #fff;
`

const Orders = styled.table`
    width: 100%;
    table-layout: fixed;
    border-collapse: separate;
    border-spacing: 0;
    font-size: 11px;
    text-align: right;
    white-space: nowrap;

    th {
        height: 25px;
        padding: 0 4px 0 7px;
        font-weight: 400;
        border-right: 1px solid #dfe3e6;
        border-bottom: 2px solid #c8c8c8;
        background: linear-gradient(#fff 0, #fff 40%, #f3f5f7 42%, #f1f3f5 100%);
    }

    th:first-child,
    td:first-child {
        text-align: left;
    }

    td {
        height: 19px;
        padding: 0 2px 0 3px;
        border-right: 1px solid #c8c8c8;
    }

    td:last-child,
    th:last-child {
        border-right: 0;
    }

    tfoot td {
        height: 20px;
        border: 0;
        font-weight: 700;
        background: #c8c8c8;
    }
`

const WithIcon = styled.span`
    display: flex;
    align-items: center;
    gap: 7px;
`

const Profit = styled.span`
    display: flex;
    align-items: center;
    justify-content: flex-end;
    gap: 9px;
    padding-right: ${(p) => p.$pad}px;
`

const CloseOrder = styled.button`
    font-size: 11px;
    font-weight: 700;
    color: #9a9a9a;
`

const PanelTabs = styled.nav`
    display: flex;
    margin-top: auto;
    height: 20px;
    padding-left: 1px;
    border-top: 1px solid #000;
    background: ${colors.face};
    color: ${colors.muted};
    font-size: 11px;
`

const PanelTab = styled.button`
    height: 18px;
    padding: 0 9px;
    background: linear-gradient(#555, #555) right 4px / 1px 11px no-repeat;
    ${(p) =>
        p.$active &&
        css`
            color: #000;
            background: #fff;
            border: solid #000;
            border-width: 0 2px 2px 1px;
        `}
`

const StatusBar = styled.footer`
    display: flex;
    align-items: center;
    flex: 0 0 22px;
    padding: 3px 0 0 2px;
    font-size: 11px;
`

const Status = styled.span`
    flex: ${(p) => (p.$w ? `0 0 ${p.$w}px` : '1')};
    display: flex;
    align-items: center;
    gap: 48px;
    height: 16px;
    padding-left: ${(p) => (p.$w ? 5 : 0)}px;
    border-left: ${(p) => (p.$w ? 1 : 0)}px solid #a0a0a0;
`

const menu = ['File', 'View', 'Insert', 'Charts', 'Tools', 'Window', 'Help']
const periods = ['M1', 'M5', 'M15', 'M30', 'H1', 'H4', 'D1', 'W1', 'MN']

const tabs = [
    ['EURAUD,Daily', 88], ['GBPAUD,Daily', 88], ['AUDCHF,Weekly', 104], ['EURCAD,Weekly', 104], ['EURCHF,Daily', 88],
    ['EURGBP,Daily', 88], ['EURJPY,Daily', 88], ['EURUSD,Daily', 88], ['EURNZD,H4', 80], ['CADCHF,Weekly', 104],
    ['CHFJPY,Weekly', 100], ['GBPCHF,Daily', 88], ['USDCHF,Daily', 88], ['NZDCHF,Weekly', 100], ['GBPNZD,Daily', 88],
    ['NZDJPY,H4', 76], ['NZDUSD,Daily', 88], ['NZDCAD,Weekly', 104], ['CADJPY,Daily', 88], ['GBPCAD,Daily', 88], ['USDCAD,Daily', 88],
]

const columns = [
    ['Order', 187], ['Time', 261], ['Type', 130], ['Size', 101], ['Symbol', 130], ['Price', 145],
    ['S / L', 145], ['T / P', 145], ['Price', 145], ['Commission', 145], ['Swap', 145], ['Profit'],
]

const order = ['2013.05.16 01:24', 'sell', '0.01', 'usdjpy', '102.17', '0.00', '0.00', '103.24', '0.00', '-0.02']

const panelTabs = ['Trade', 'Account History', 'News', 'Alerts', 'Mailbox', 'Signals', 'Code Base', 'Experts', 'Journal']

const statuses = [
    ['Default', 115], ['2013.03.14 00:00', 102], ['O: 1.8218', 71], ['H: 1.8375', 71],
    ['L: 1.8190', 68], ['C: 1.8330', 70], ['V: 17650', 66],
]

function Toolbar() {
    return (
        <ToolBar>
            <Grip />
            <DropTool icon="newChart" label="New chart" w={38} />
            <DropTool icon="profiles" label="Profiles" w={38} />
            <Divider />
            <IconTool icon="market" label="Market Watch" />
            <IconTool icon="navigator" label="Data Window" />
            <IconTool icon="folder" label="Navigator" />
            <IconTool icon="terminal" label="Terminal" pressed />
            <IconTool icon="tester" label="Strategy Tester" />
            <Divider />
            <Tool $w={88}>
                <Icon>{icons.order}</Icon>
                New Order
            </Tool>
            <IconTool icon="alert" label="MetaEditor" />
            <IconTool icon="person" label="Options" />
            <Tool $w={110}>
                <Icon>{icons.expert}</Icon>
                Expert Advisors
            </Tool>
            <BarEnd $single />
            <Grip />
            {periods.map((p) => (
                <Period key={p} $pressed={p === 'D1'}>{p}</Period>
            ))}
            <BarEnd $w={5} />
            <Grip $after={2} />
            <IconTool icon="cursor" label="Cursor" pressed />
            <IconTool icon="cross" label="Crosshair" />
            <Divider $w={5} />
            <IconTool icon="vline" label="Vertical line" />
            <IconTool icon="hline" label="Horizontal line" />
            <IconTool icon="trend" label="Trendline" />
            <IconTool icon="channel" label="Equidistant channel" />
            <IconTool icon="fibo" label="Fibonacci" />
            <Tool><Letter>A</Letter></Tool>
            <Tool><Letter $boxed>T</Letter></Tool>
            <DropTool icon="arrows" label="Arrows" w={38} />
            <BarEnd $w={4} />
            <Grip $after={3} />
            <IconTool icon="bars" label="Bar chart" />
            <IconTool icon="candles" label="Candlesticks" pressed />
            <IconTool icon="line" label="Line chart" />
            <Divider $w={5} />
            <IconTool icon="zoomIn" label="Zoom in" />
            <IconTool icon="zoomOut" label="Zoom out" />
            <Divider $w={7} />
            <IconTool icon="scroll" label="Auto scroll" pressed />
            <IconTool icon="shift" label="Chart shift" pressed />
            <Divider $w={6} />
            <DropTool icon="indicators" label="Indicators" />
            <DropTool icon="clock" label="Periods" />
            <DropTool icon="template" label="Templates" />
            <BarEnd $single />
            <Notice aria-label="Notifications">
                <svg width="16" height="17" viewBox="0 0 16 17">
                    <path d="M0 0h16v12h-5l-3 4-1-4H0z" fill="#5878b0" />
                    <text x="8" y="10" fill="#fff" fontSize="11" textAnchor="middle">4</text>
                </svg>
            </Notice>
        </ToolBar>
    )
}

export default function App() {
    return (
        <Page>
            <GlobalStyle />
            <AppBar>
                <AppTitle>
                    <svg width="16" height="18" viewBox="0 0 16 18">
                        <rect y="1" width="16" height="16" fill="#e9ecf0" />
                        <path d="M0 14l4-5 3 3 4-7 2 3 3-5" fill="none" stroke="#c22a1c" strokeWidth="2" />
                        <path d="M0 15h16" stroke="#9ab" />
                    </svg>
                    1001854842: SIGTrader 4 - Demo Account - GBPNZD,Daily
                </AppTitle>
                <AppControls>
                    <AppControl aria-label="Minimize"><MinGlyph /></AppControl>
                    <AppControl aria-label="Restore">
                        <svg width="12" height="12" viewBox="0 0 12 12">
                            <path d="M4 .5h7.500V9H9" fill="#fff" stroke="#444" />
                            <path fillRule="evenodd" d="M.5 3h8v8.500h-8zM3 6h3v3H3z" fill="#fff" stroke="#444" />
                        </svg>
                    </AppControl>
                    <AppControl $close aria-label="Close"><CloseGlyph /></AppControl>
                </AppControls>
            </AppBar>
            <MenuBar>
                {menu.map((item) => (
                    <button key={item}>{item}</button>
                ))}
            </MenuBar>
            <Toolbar />
            <Workspace>
                <Sliver $left={1272} $top={434} $w={598} />
                <Sliver $left={918} $top={857} $w={352} />
                {stacking.map((id) => (
                    <ChartWindow key={id} data={charts[id]} />
                ))}
            </Workspace>
            <ChartTabs>
                {tabs.map(([name, w]) => (
                    <ChartTab key={name} $w={w} $active={name === 'GBPNZD,Daily'}>{name}</ChartTab>
                ))}
                <TabArrows>
                    <svg width="5" height="8" viewBox="0 0 5 8"><path d="M5 0v8L0 4z" /></svg>
                    <svg width="5" height="8" viewBox="0 0 5 8"><path d="M0 0v8l5-4z" /></svg>
                </TabArrows>
            </ChartTabs>
            <Terminal>
                <Side>
                    <SideClose aria-label="Close terminal">x</SideClose>
                    <SideLabel>Terminal</SideLabel>
                </Side>
                <Panel>
                    <Orders>
                        <colgroup>
                            {columns.map(([name, w], i) => (
                                <col key={`${name}-${i}`} width={w} />
                            ))}
                        </colgroup>
                        <thead>
                            <tr>
                                {columns.map(([name], i) => (
                                    <th key={`${name}-${i}`}>
                                        {name}
                                        {i === 0 && (
                                            <svg width="18" height="7" viewBox="0 0 18 7">
                                                <path d="M12 7l3-7" stroke="#777" />
                                            </svg>
                                        )}
                                    </th>
                                ))}
                            </tr>
                        </thead>
                        <tbody>
                            <tr>
                                <td>
                                    <WithIcon>
                                        <svg width="14" height="15" viewBox="0 0 14 15">
                                            <path d="M1.500.5h7l3 3v10h-10z" fill="#fff" stroke="#666" />
                                            <circle cx="10" cy="11" r="3.500" fill="#e04a20" stroke="#a32c0c" />
                                        </svg>
                                        87474697
                                    </WithIcon>
                                </td>
                                {order.map((value, i) => (
                                    <td key={i}>{value}</td>
                                ))}
                                <td>
                                    <Profit $pad={4}>
                                        -10.36
                                        <CloseOrder aria-label="Close order">✕</CloseOrder>
                                    </Profit>
                                </td>
                            </tr>
                        </tbody>
                        <tfoot>
                            <tr>
                                <td colSpan={11}>
                                    <WithIcon>
                                        <svg width="14" height="15" viewBox="0 0 14 15">
                                            <rect x="0.5" y="0.5" width="11" height="13" fill="#fff" stroke="#666" />
                                            <path d="M5 3h2v4h2.500L6 11 2.500 7H5z" fill="#d83a12" />
                                        </svg>
                                        Balance: 4 969.06&nbsp; Equity: 4 958.68&nbsp; Margin: 2.00&nbsp; Free margin: 4 956.68&nbsp; Margin level: 247934.00%
                                    </WithIcon>
                                </td>
                                <td><Profit $pad={22}>-10.38</Profit></td>
                            </tr>
                        </tfoot>
                    </Orders>
                    <PanelTabs>
                        {panelTabs.map((name) => (
                            <PanelTab key={name} $active={name === 'Trade'}>{name}</PanelTab>
                        ))}
                    </PanelTabs>
                </Panel>
            </Terminal>
            <StatusBar>
                <Status>For Help, press F1</Status>
                {statuses.map(([text, w]) => (
                    <Status key={text} $w={w}>{text}</Status>
                ))}
                <Status $w={162}>
                    <svg width="24" height="13" viewBox="0 0 24 13" shapeRendering="crispEdges">
                        {[0, 1, 2, 3, 4, 5, 6, 7].map((i) => (
                            <g key={i}>
                                <rect x={i * 3} y="0" width="2" height={10 - i} fill="#5a7a1a" />
                                <rect x={i * 3} y={11 - i} width="2" height={2 + i} fill="#a52a14" />
                            </g>
                        ))}
                    </svg>
                    33/2 kb
                </Status>
            </StatusBar>
        </Page>
    )
}
